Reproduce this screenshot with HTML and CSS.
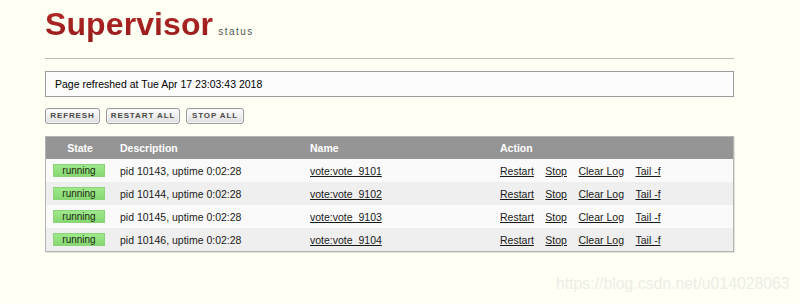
FILE: index.html
```html
<!DOCTYPE html>
<html>
<head>
<meta charset="utf-8">
<title>Supervisor Status</title>
<link rel="stylesheet" href="styles.css">
</head>
<body>
<div class="wrapper">
  <header class="header">
    <span class="logo">Supervisor</span><span class="logo-sub">status</span>
  </header>
  <div class="status-msg">Page refreshed at Tue Apr 17 23:03:43 2018</div>
  <ul class="buttons">
    <li><a class="btn">Refresh</a></li>
    <li><a class="btn">Restart All</a></li>
    <li><a class="btn">Stop All</a></li>
  </ul>
  <table class="procs">
    <thead>
      <tr><th class="state">State</th><th class="desc">Description</th><th class="name">Name</th><th class="action">Action</th></tr>
    </thead>
    <tbody>
      <tr>
        <td class="status"><span class="running">running</span></td>
        <td>pid 10143, uptime 0:02:28</td>
        <td><a>vote:vote_9101</a></td>
        <td class="actions"><a>Restart</a><a>Stop</a><a>Clear Log</a><a>Tail -f</a></td>
      </tr>
      <tr class="shade">
        <td class="status"><span class="running">running</span></td>
        <td>pid 10144, uptime 0:02:28</td>
        <td><a>vote:vote_9102</a></td>
        <td class="actions"><a>Restart</a><a>Stop</a><a>Clear Log</a><a>Tail -f</a></td>
      </tr>
      <tr>
        <td class="status"><span class="running">running</span></td>
        <td>pid 10145, uptime 0:02:28</td>
        <td><a>vote:vote_9103</a></td>
        <td class="actions"><a>Restart</a><a>Stop</a><a>Clear Log</a><a>Tail -f</a></td>
      </tr>
      <tr class="shade">
        <td class="status"><span class="running">running</span></td>
        <td>pid 10146, uptime 0:02:28</td>
        <td><a>vote:vote_9104</a></td>
        <td class="actions"><a>Restart</a><a>Stop</a><a>Clear Log</a><a>Tail -f</a></td>
      </tr>
    </tbody>
  </table>
</div>
<div class="watermark">https://blog.csdn.net/u014028063</div>
</body>
</html>
```

FILE: styles.css
```css
html, body {
  margin: 0;
  padding: 0;
}
body {
  background: #fffff3;
  font-family: "Liberation Sans", Arial, sans-serif;
  font-size: 10.5px;
  color: #1a1a1a;
  width: 800px;
  height: 304px;
  overflow: hidden;
  position: relative;
}
.wrapper {
  margin-left: 45px;
  width: 689px;
}
.header {
  height: 59px;
  box-sizing: border-box;
  padding-top: 6px;
  border-bottom: 1px solid #bdbdbd;
  display: flex;
  align-items: baseline;
}
.logo {
  font-size: 32px;
  line-height: 36px;
  font-weight: bold;
  color: #a3201f;
  letter-spacing: 0.1px;
  background: linear-gradient(#b52a27, #951a1a);
  -webkit-background-clip: text;
  background-clip: text;
  -webkit-text-fill-color: transparent;
}
.logo-sub {
  margin-left: 5px;
  font-size: 10px;
  letter-spacing: 1.5px;
  color: #555;
}
.status-msg {
  margin-top: 12px;
  height: 26px;
  box-sizing: border-box;
  border: 1px solid #9d9d9d;
  background: #fcfcfc;
  padding-left: 9px;
  line-height: 24px;
  color: #000;
}
.buttons {
  list-style: none;
  margin: 11px 0 0;
  padding: 0;
  display: flex;
  gap: 6px;
}
.btn {
  display: block;
  height: 16px;
  box-sizing: border-box;
  border: 1px solid #9a9a9a;
  border-radius: 3px;
  background: linear-gradient(#ffffff, #dcdcdc);
  font-size: 8px;
  font-weight: bold;
  letter-spacing: 0.9px;
  text-transform: uppercase;
  color: #4a4a4a;
  line-height: 14px;
  text-align: center;
  box-shadow: inset 0 0 0 1px #f6f6f6;
}
.buttons li:nth-child(1) .btn { width: 55px; }
.buttons li:nth-child(2) .btn { width: 74px; }
.buttons li:nth-child(3) .btn { width: 58px; }
.procs {
  margin-top: 12px;
  width: 689px;
  border-collapse: collapse;
  border: 1px solid #b4b4b4;
  box-shadow: 1px 1px 0 #e2e2e2;
}
.procs th {
  height: 22px;
  padding: 0;
  background: #959595;
  color: #fff;
  font-weight: bold;
  text-align: left;
}
.procs th.state {
  text-align: center;
  width: 68px;
}
.procs th.desc { width: 190px; padding-left: 6px; }
.procs th.name { width: 190px; }
.procs td {
  height: 23px;
  padding: 0;
  background: #fafafa;
  color: #1a1a1a;
}
.procs td:nth-child(2) { padding-left: 6px; }
.procs tr.shade td {
  background: #efefef;
}
.procs a {
  color: #1a1a1a;
  text-decoration: underline;
}
.status span {
  display: block;
  margin-left: 7px;
  width: 52px;
  height: 13px;
  box-sizing: border-box;
  line-height: 12px;
  text-align: center;
  font-size: 10px;
  color: #1e2a12;
  background: linear-gradient(#9fe88c, #86d872);
  border: 1px solid #8ad477;
}
.actions a {
  margin-right: 11.5px;
}
.watermark {
  position: absolute;
  left: 556px;
  top: 275px;
  font-size: 15.8px;
  color: #ededE7;
}
```
